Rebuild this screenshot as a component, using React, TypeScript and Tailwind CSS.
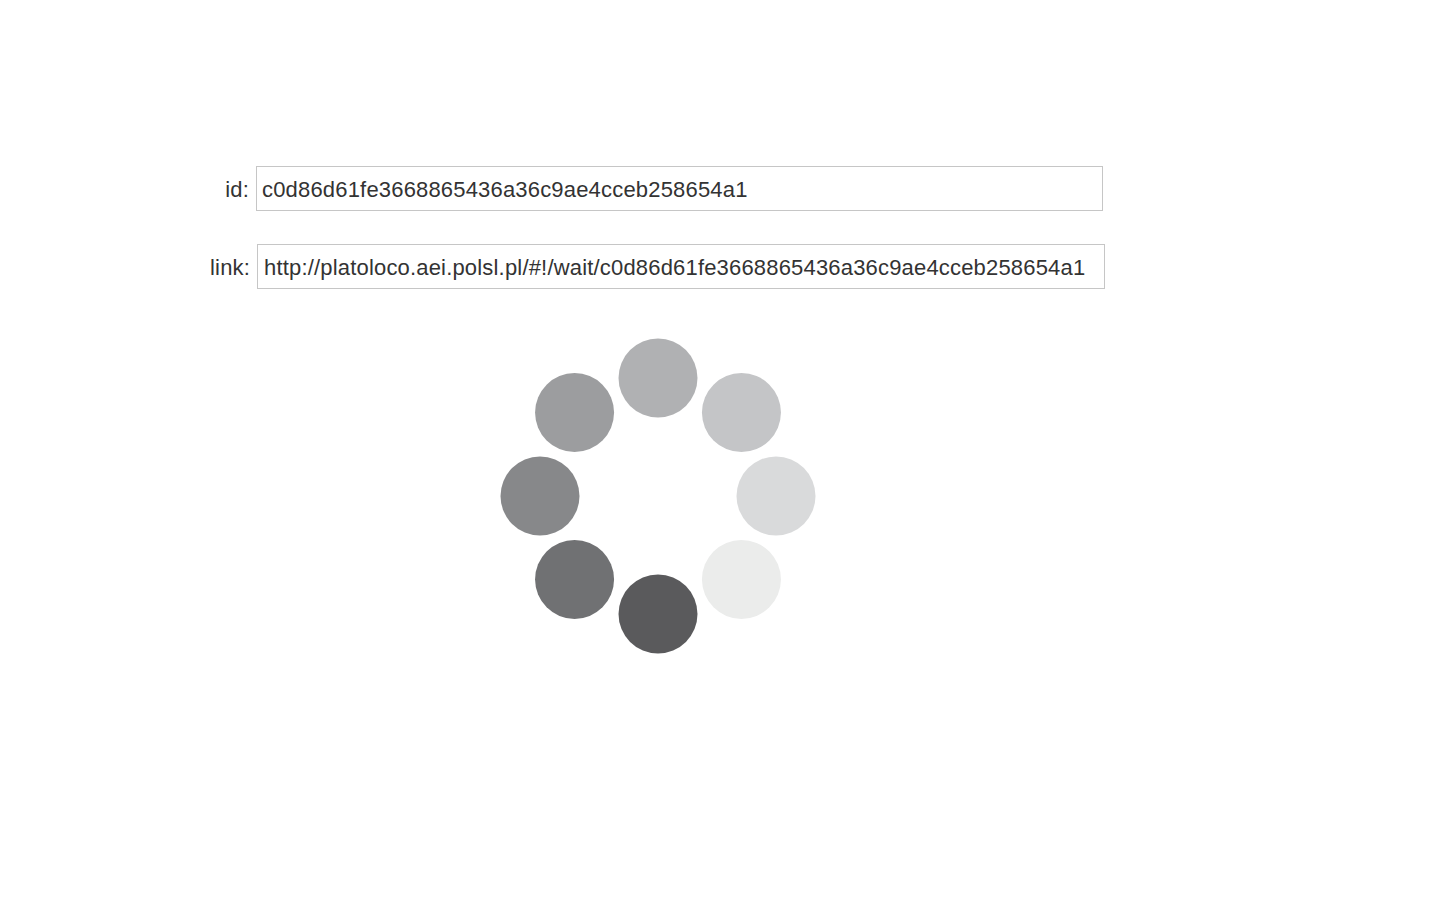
import React from "react";

const ID = "c0d86d61fe3668865436a36c9ae4cceb258654a1";
const LINK = "http://platoloco.aei.polsl.pl/#!/wait/" + ID;

const dots = [
  { a: -90, c: "#b0b1b3" },
  { a: -45, c: "#c4c5c7" },
  { a: 0, c: "#d9dadb" },
  { a: 45, c: "#ebeceb" },
  { a: 90, c: "#5a5a5c" },
  { a: 135, c: "#707173" },
  { a: 180, c: "#87888a" },
  { a: 225, c: "#9c9d9f" },
];

export default function App() {
  return (
    <div
      className="min-h-[898px] w-full bg-white pt-[166px] text-[#333333]"
      style={{ fontFamily: '"Liberation Sans", Arial, Helvetica, sans-serif' }}
    >
      <div className="ml-[210px] flex w-[895px] flex-col">
        <div className="flex items-center">
          <label className="mt-[3px] w-[39px] text-right text-[22px] leading-none tracking-[0.18px]">id:</label>
          <input
            readOnly
            value={ID}
            className="ml-[7px] h-[45px] w-[847px] border border-[#c6c6c6] bg-white px-[5px] pt-[3px] text-[22px] tracking-[0.18px] text-[#333333] outline-none"
          />
        </div>
        <div className="mt-[33px] flex items-center">
          <label className="mt-[3px] w-[40px] text-right text-[22px] leading-none tracking-[0.18px]">link:</label>
          <input
            readOnly
            value={LINK}
            className="ml-[7px] h-[45px] w-[848px] border border-[#c6c6c6] bg-white px-[6px] pt-[3px] text-[22px] tracking-[0.18px] text-[#333333] outline-none"
          />
        </div>
        <div className="mt-[47px] flex justify-center">
          <svg width="320" height="320" viewBox="0 0 320 320">
            {dots.map((d, i) => {
              const r = (d.a * Math.PI) / 180;
              return (
                <circle
                  key={i}
                  cx={160 + 118 * Math.cos(r)}
                  cy={160 + 118 * Math.sin(r)}
                  r={39.5}
                  fill={d.c}
                />
              );
            })}
          </svg>
        </div>
      </div>
    </div>
  );
}
